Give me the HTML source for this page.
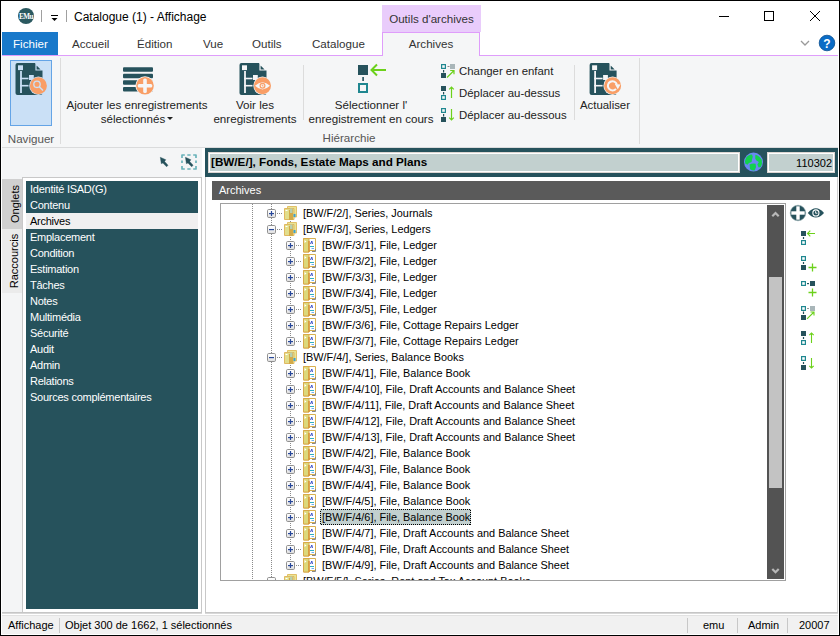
<!DOCTYPE html>
<html><head><meta charset="utf-8">
<style>
*{margin:0;padding:0;box-sizing:border-box}
html,body{width:840px;height:636px;overflow:hidden;background:#fff}
body{position:relative;font-family:"Liberation Sans",sans-serif;color:#000}
.a{position:absolute}
.t{position:absolute;white-space:nowrap;line-height:1}
.win{position:absolute;left:0;top:0;width:840px;height:636px;border:1px solid #000;z-index:50}
</style></head><body>
<div class="win"></div>
<svg class="a" style="left:0;top:0" width="840" height="32">
  <circle cx="26" cy="16" r="8" fill="#2b5960"/>
  <text x="26" y="18.8" font-family="Liberation Serif" font-weight="bold" font-size="7.2" fill="#fff" text-anchor="middle" letter-spacing="-0.6">EMu</text>
  <rect x="41" y="10" width="1" height="12" fill="#a0a0a0"/>
  <rect x="51" y="15" width="7" height="1" fill="#000"/>
  <path d="M51.5 18 L57.5 18 L54.5 21 Z" fill="#000"/>
  <rect x="66" y="10" width="1" height="12" fill="#a0a0a0"/>
  <rect x="719" y="16" width="10" height="1" fill="#000"/>
  <rect x="764.5" y="11.5" width="9" height="9" fill="none" stroke="#000" stroke-width="1"/>
  <path d="M810 11 L820 21 M820 11 L810 21" stroke="#000" stroke-width="1"/>
</svg>
<div class="t" style="left:74px;top:11px;font-size:12px;color:#000">Catalogue (1) - Affichage</div>
<div class="a" style="left:382px;top:5px;width:99px;height:27px;background:#e9ccfb"></div>
<div class="t" style="left:382px;top:13px;width:99px;text-align:center;font-size:11.6px;color:#333">Outils d'archives</div>
<div class="a" style="left:2px;top:32px;width:56px;height:23px;background:#1979ca"></div>
<div class="t" style="left:13px;top:38px;font-size:11.6px;color:#fff">Fichier</div>
<div class="t" style="left:72px;top:38px;font-size:11.6px;color:#333">Accueil</div>
<div class="t" style="left:137px;top:38px;font-size:11.6px;color:#333">Édition</div>
<div class="t" style="left:203px;top:38px;font-size:11.6px;color:#333">Vue</div>
<div class="t" style="left:252px;top:38px;font-size:11.6px;color:#333">Outils</div>
<div class="t" style="left:312px;top:38px;font-size:11.6px;color:#333">Catalogue</div>
<div class="a" style="left:2px;top:55px;width:836px;height:1px;background:#df9dfb"></div>
<div class="a" style="left:382px;top:32px;width:98px;height:24px;background:#f5f6f7;border:1px solid #df9dfb;border-bottom:none"></div>
<div class="t" style="left:382px;top:38px;width:98px;text-align:center;font-size:11.6px;color:#333">Archives</div>
<svg class="a" style="left:795px;top:30px" width="45" height="25">
  <path d="M6 11 L10 15 L14 11" fill="none" stroke="#9a9a9a" stroke-width="1.3"/>
  <circle cx="32" cy="13" r="7.8" fill="#0b6cc6" stroke="#0a4f90" stroke-width="0.8"/>
  <text x="32" y="17.5" font-size="12" font-weight="bold" fill="#fff" text-anchor="middle">?</text>
</svg>
<div class="a" style="left:2px;top:56px;width:836px;height:91px;background:#f5f6f7"></div>
<div class="a" style="left:2px;top:147px;width:836px;height:1px;background:#dadbdc"></div>
<div class="a" style="left:10px;top:60px;width:42px;height:66px;background:#cae0f6;border:1px solid #64a4e6"></div>
<svg class="a" style="left:0;top:56px" width="660" height="92">
  <g transform="translate(15.5,7)">
      <path d="M0 2 Q0 0 2 0 L19.5 0 L27 7.5 L27 30 Q27 32 25 32 L2 32 Q0 32 0 30 Z" fill="#26525c"/>
      <path d="M20.5 1 L20.5 7 L26.5 7 Z" fill="#26525c" stroke="#cae0f6" stroke-width="1.2"/>
      <rect x="2.5" y="2.3" width="5" height="4.8" fill="#cae0f6"/>
      <rect x="4.6" y="8" width="1.8" height="22" fill="#cae0f6"/>
      <rect x="4.6" y="14.7" width="8.4" height="1.6" fill="#cae0f6"/>
      <rect x="4.6" y="21.9" width="8.4" height="1.6" fill="#cae0f6"/>
      <rect x="13.5" y="12" width="4.8" height="5" fill="#cae0f6"/>
    </g>
  <circle cx="38.4" cy="29.8" r="9.2" fill="#cae0f6"/>
  <circle cx="38.4" cy="29.8" r="8.5" fill="#f99e66"/>
  <circle cx="37" cy="28.3" r="3.2" fill="none" stroke="#cae0f6" stroke-width="1.3"/>
  <path d="M39.3 30.8 L43 34.5" stroke="#cae0f6" stroke-width="1.5"/>
  <rect x="60" y="2" width="1" height="86" fill="#dcdcdc"/>
  <rect x="123" y="11.2" width="30" height="4.5" rx="1" fill="#26525c"/>
  <rect x="123" y="17.7" width="30" height="4.5" rx="1" fill="#26525c"/>
  <rect x="123" y="24.3" width="30" height="4.5" rx="1" fill="#26525c"/>
  <rect x="123" y="31" width="30" height="4.5" rx="1" fill="#26525c"/>
  <circle cx="145" cy="29.8" r="9.6" fill="#f5f6f7"/>
  <circle cx="145" cy="29.8" r="8.8" fill="#f99e66"/>
  <rect x="143.2" y="22.5" width="3.6" height="14.6" rx="1.5" fill="#f5f6f7"/>
  <rect x="137.7" y="28" width="14.6" height="3.6" rx="1.5" fill="#f5f6f7"/>
  <g transform="translate(239.5,7)">
      <path d="M0 2 Q0 0 2 0 L19.5 0 L27 7.5 L27 30 Q27 32 25 32 L2 32 Q0 32 0 30 Z" fill="#26525c"/>
      <path d="M20.5 1 L20.5 7 L26.5 7 Z" fill="#26525c" stroke="#f5f6f7" stroke-width="1.2"/>
      <rect x="2.5" y="2.3" width="5" height="4.8" fill="#f5f6f7"/>
      <rect x="4.6" y="8" width="1.8" height="22" fill="#f5f6f7"/>
      <rect x="4.6" y="14.7" width="8.4" height="1.6" fill="#f5f6f7"/>
      <rect x="4.6" y="21.9" width="8.4" height="1.6" fill="#f5f6f7"/>
      <rect x="13.5" y="12" width="4.8" height="5" fill="#f5f6f7"/>
    </g>
  <circle cx="262.5" cy="29.8" r="9.2" fill="#f5f6f7"/>
  <circle cx="262.5" cy="29.8" r="8.5" fill="#f99e66"/>
  <path d="M255 29.8 Q262.5 22.5 270 29.8 Q262.5 37 255 29.8 Z" fill="#f5f6f7"/>
  <circle cx="262.5" cy="29.8" r="3" fill="#f99e66"/>
  <circle cx="262.5" cy="29.8" r="1.8" fill="#f5f6f7"/>
  <path d="M262.3 28.6 V30 H263.6" fill="none" stroke="#f99e66" stroke-width="0.9"/>
  <rect x="303" y="9" width="1" height="55" fill="#dcdcdc"/>
  <rect x="358" y="9" width="10" height="10" fill="#26525c"/>
  <rect x="362.3" y="21" width="1.6" height="4" fill="#26525c"/>
  <rect x="359" y="28" width="8" height="8" fill="none" stroke="#1f8790" stroke-width="2"/>
  <path d="M371 14 L386 14 M377 8.5 L371.5 14 L377 19.5" fill="none" stroke="#6cd11b" stroke-width="2"/>
  <g>
    <rect x="441.6" y="8.6" width="3.8" height="3.8" fill="none" stroke="#1f8790" stroke-width="1.2"/>
    <rect x="447.5" y="10" width="2" height="1" fill="#888"/>
    <rect x="450" y="8" width="5" height="5" fill="#a9b6b9"/>
    <rect x="443" y="14" width="1.2" height="2.5" fill="#26525c"/>
    <rect x="441" y="17" width="5" height="5" fill="#26525c"/>
    <path d="M447 21.5 L454 14.5 M450.2 14.5 L454 14.5 L454 18.3" fill="none" stroke="#6cd11b" stroke-width="1.2"/>
  </g>
  <g>
    <rect x="441" y="30" width="5" height="5" fill="#26525c"/>
    <rect x="443" y="36" width="1.2" height="2.5" fill="#26525c"/>
    <rect x="441.6" y="39.6" width="3.8" height="3.8" fill="none" stroke="#1f8790" stroke-width="1.2"/>
    <path d="M451.5 31 L451.5 42 M449.2 33.3 L451.5 31 L453.8 33.3" fill="none" stroke="#6cd11b" stroke-width="1.2"/>
  </g>
  <g>
    <rect x="441.6" y="52.6" width="3.8" height="3.8" fill="none" stroke="#1f8790" stroke-width="1.2"/>
    <rect x="443" y="58" width="1.2" height="2.5" fill="#26525c"/>
    <rect x="441" y="61" width="5" height="5" fill="#26525c"/>
    <path d="M451.5 53 L451.5 64 M449.2 61.7 L451.5 64 L453.8 61.7" fill="none" stroke="#6cd11b" stroke-width="1.2"/>
  </g>
  <rect x="574" y="9" width="1" height="55" fill="#dcdcdc"/>
  <g transform="translate(589.6,7)">
      <path d="M0 2 Q0 0 2 0 L19.5 0 L27 7.5 L27 30 Q27 32 25 32 L2 32 Q0 32 0 30 Z" fill="#26525c"/>
      <path d="M20.5 1 L20.5 7 L26.5 7 Z" fill="#26525c" stroke="#f5f6f7" stroke-width="1.2"/>
      <rect x="2.5" y="2.3" width="5" height="4.8" fill="#f5f6f7"/>
      <rect x="4.6" y="8" width="1.8" height="22" fill="#f5f6f7"/>
      <rect x="4.6" y="14.7" width="8.4" height="1.6" fill="#f5f6f7"/>
      <rect x="4.6" y="21.9" width="8.4" height="1.6" fill="#f5f6f7"/>
      <rect x="13.5" y="12" width="4.8" height="5" fill="#f5f6f7"/>
    </g>
  <circle cx="612.6" cy="29.7" r="9.2" fill="#f5f6f7"/>
  <circle cx="612.6" cy="29.7" r="8.5" fill="#f99e66"/>
  <path d="M616.9 28.6 A4.6 4.6 0 1 0 616 32.8" fill="none" stroke="#f5f6f7" stroke-width="2"/>
  <path d="M614.8 28 L620.5 28.4 L617.8 33.2 Z" fill="#f5f6f7"/>
  <rect x="639" y="2" width="1" height="86" fill="#dcdcdc"/>
</svg>
<div class="t" style="left:0px;top:132.5px;width:62px;text-align:center;font-size:11.6px;color:#555">Naviguer</div>
<div class="t" style="left:62px;top:98.1px;width:150px;text-align:center;font-size:11.6px;color:#222;line-height:13.4px">Ajouter les enregistrements<br>sélectionnés<span style="display:inline-block;width:0;height:0;border-left:3px solid transparent;border-right:3px solid transparent;border-top:3px solid #222;vertical-align:3px;margin-left:2px"></span></div>
<div class="t" style="left:205px;top:98.1px;width:100px;text-align:center;font-size:11.6px;color:#222;line-height:13.4px">Voir les<br>enregistrements</div>
<div class="t" style="left:300px;top:98.1px;width:142px;text-align:center;font-size:11.6px;color:#222;line-height:13.4px">Sélectionner l'<br>enregistrement en cours</div>
<div class="t" style="left:304px;top:132px;width:90px;text-align:center;font-size:11.6px;color:#555">Hiérarchie</div>
<div class="t" style="left:459px;top:66px;font-size:11.4px;color:#222">Changer en enfant</div>
<div class="t" style="left:459px;top:88px;font-size:11.4px;color:#222">Déplacer au-dessus</div>
<div class="t" style="left:459px;top:110px;font-size:11.4px;color:#222">Déplacer au-dessous</div>
<div class="t" style="left:573px;top:100px;width:64px;text-align:center;font-size:11.4px;color:#222">Actualiser</div>
<div class="a" style="left:2px;top:148px;width:203px;height:465px;background:#f4f5f6"></div>
<div class="a" style="left:202px;top:148px;width:3px;height:465px;background:#fff"></div>
<svg class="a" style="left:150px;top:148px" width="52" height="28">
  <path d="M10.3 9.3 L15.8 11.7 L14.6 13.4 L18 17.2 L16.6 18.8 L12.9 15 L11.3 15.7 Z" fill="#26525c" stroke="#26525c" stroke-width="0.4" stroke-linejoin="round"/>
  <path d="M32 10 V7 H34.8 M43.2 7 H46 V10 M46 18 V21 H43.2 M34.8 21 H32 V18 M37.3 7 H40.6 M37.3 21 H40.6 M32 12.5 V15 M46 12.5 V15" fill="none" stroke="#6ab3ba" stroke-width="1.7" stroke-linejoin="round"/>
  <path d="M35.4 9.3 L40.9 11.7 L39.7 13.4 L43.1 17.2 L41.7 18.8 L38 15 L36.4 15.7 Z" fill="#26525c" stroke="#26525c" stroke-width="0.4" stroke-linejoin="round"/>
</svg>
<div class="a" style="left:2px;top:179px;width:20px;height:50px;background:#d0d0d0"></div>
<div class="a" style="left:2px;top:229px;width:20px;height:64px;background:#ebebeb"></div>
<div class="t" style="left:-9px;top:198px;width:50px;height:12px;text-align:center;font-size:11px;transform:rotate(-90deg)">Onglets</div>
<div class="t" style="left:-17px;top:255px;width:64px;height:12px;text-align:center;font-size:11px;transform:rotate(-90deg)">Raccourcis</div>
<div class="a" style="left:22px;top:177px;width:180px;height:436px;background:#fff;border:1px solid #c8c8c8;border-bottom:none"></div>
<div class="a" style="left:26px;top:181px;width:172px;height:428px;background:#26525c"></div>
<div class="t" style="left:30px;top:184px;font-size:11px;letter-spacing:-0.25px;color:#fff">Identité ISAD(G)</div>
<div class="t" style="left:30px;top:200px;font-size:11px;letter-spacing:-0.25px;color:#fff">Contenu</div>
<div class="a" style="left:26px;top:213px;width:172px;height:16px;background:#f0f0f0"></div>
<div class="t" style="left:30px;top:216px;font-size:11px;letter-spacing:-0.25px;color:#000">Archives</div>
<div class="t" style="left:30px;top:232px;font-size:11px;letter-spacing:-0.25px;color:#fff">Emplacement</div>
<div class="t" style="left:30px;top:248px;font-size:11px;letter-spacing:-0.25px;color:#fff">Condition</div>
<div class="t" style="left:30px;top:264px;font-size:11px;letter-spacing:-0.25px;color:#fff">Estimation</div>
<div class="t" style="left:30px;top:280px;font-size:11px;letter-spacing:-0.25px;color:#fff">Tâches</div>
<div class="t" style="left:30px;top:296px;font-size:11px;letter-spacing:-0.25px;color:#fff">Notes</div>
<div class="t" style="left:30px;top:312px;font-size:11px;letter-spacing:-0.25px;color:#fff">Multimédia</div>
<div class="t" style="left:30px;top:328px;font-size:11px;letter-spacing:-0.25px;color:#fff">Sécurité</div>
<div class="t" style="left:30px;top:344px;font-size:11px;letter-spacing:-0.25px;color:#fff">Audit</div>
<div class="t" style="left:30px;top:360px;font-size:11px;letter-spacing:-0.25px;color:#fff">Admin</div>
<div class="t" style="left:30px;top:376px;font-size:11px;letter-spacing:-0.25px;color:#fff">Relations</div>
<div class="t" style="left:30px;top:392px;font-size:11px;letter-spacing:-0.25px;color:#fff">Sources complémentaires</div>
<div class="a" style="left:205px;top:148px;width:633px;height:29px;background:#26525c"></div>
<div class="a" style="left:208px;top:152px;width:532px;height:21px;background:#c2d0cf;border:1px solid #dcd6d2;box-shadow:inset 0 0 0 1px #fff"></div>
<div class="t" style="left:211px;top:156px;font-size:11.7px;font-weight:bold;color:#000">[BW/E/], Fonds, Estate Maps and Plans</div>
<svg class="a" style="left:743px;top:152px" width="21" height="21">
  <circle cx="10.5" cy="10.1" r="9.5" fill="#6a88f2"/>
  <path d="M3 6 Q5 2.8 9 2.5 L9.8 4.8 L9 7.5 L8.6 10 L6 11 L4.4 12.8 L2.2 11.6 Q1.6 8.5 3 6 Z" fill="#12d14e"/>
  <path d="M12.4 2.8 Q17 4 18.8 8 Q19.6 11.8 17.8 15 L15.6 15.4 L14.4 12.6 L15.8 10 L13.4 8.6 L12.2 6.4 Z" fill="#12d14e"/>
  <path d="M6.6 12.4 Q9.4 10.8 12.6 11.8 L13 15 L11.6 18.6 Q9 18.8 7 17 Z" fill="#12d14e"/>
</svg>
<div class="a" style="left:767px;top:152px;width:68px;height:21px;background:#c2d0cf;border:1px solid #dcd6d2;box-shadow:inset 0 0 0 1px #fff"></div>
<div class="t" style="left:768px;top:157.5px;width:64px;text-align:right;font-size:11px;color:#000">110302</div>
<div class="a" style="left:205px;top:177px;width:633px;height:436px;background:#fff;border-left:1px solid #c8c8c8"></div>
<div class="a" style="left:212px;top:181px;width:618px;height:19px;background:#5a5a5a"></div>
<div class="t" style="left:219px;top:185px;font-size:11px;color:#fff">Archives</div>
<div class="a" style="left:220px;top:203px;width:566px;height:378px;border:1px solid #a0a0a0;overflow:hidden;background:#fff">
<div class="a" style="left:-221px;top:-204px;width:840px;height:636px">
<svg class="a" style="left:0;top:0" width="840" height="636">
  <defs>
    <linearGradient id="eg" x1="0" y1="0" x2="0" y2="1"><stop offset="0" stop-color="#fff"/><stop offset="0.5" stop-color="#f4f4f4"/><stop offset="1" stop-color="#dcdcdc"/></linearGradient>
    <g id="fold">
      <path d="M3.5 0.5 H12.5 V11 H3.5 Z" fill="#e8e496" stroke="#e2c068" stroke-width="1"/>
      <path d="M0.5 2.5 H10 V13.5 H0.5 Z" fill="#e2de8c" stroke="#e0b860" stroke-width="1"/>
      <path d="M5 4 L9 3 L9 14 L5 14 Z" fill="#d2aa48"/>
      <path d="M6 2.5 H8.5 V7 H6 Z" fill="#b8d0b0"/>
      <path d="M9.5 8 H11.5 V11 H9.5 Z" fill="#3aa0d0"/>
      <path d="M1.5 4 H3.5 V5 H1.5 Z" fill="#fff"/>
    </g>
    <g id="file">
      <path d="M0.5 0.5 H12.5 V12.5 H6 V14 H0.5 Z" fill="#fff" stroke="#d8b050" stroke-width="1"/>
      <path d="M0.5 0.5 H6 V14 H0.5 Z" fill="#dcd87a" stroke="#d9a84a" stroke-width="1"/>
      <path d="M1.5 2 L3.5 3.5 L1.5 5 Z" fill="#fff"/>
      <path d="M6 3 V14" stroke="#d89030" stroke-width="1.4"/>
      <path d="M7.5 6 L8.8 3 L9.5 6" fill="none" stroke="#3a50c8" stroke-width="1"/>
      <path d="M7 8.5 H11" stroke="#30b0c0" stroke-width="1"/>
      <path d="M8.5 10.5 H11" stroke="#70b0f0" stroke-width="1"/>
      <path d="M12.5 11 V13.5 H9" fill="none" stroke="#888" stroke-width="1"/>
    </g>
  </defs>
<path d="M252.5 204 V580" stroke="#8a8a8a" stroke-width="1" stroke-dasharray="1 1"/>
<path d="M271.5 204 V581" stroke="#8a8a8a" stroke-width="1" stroke-dasharray="1 1"/>
<path d="M290.5 221 V341" stroke="#8a8a8a" stroke-width="1" stroke-dasharray="1 1"/>
<path d="M290.5 365 V565" stroke="#8a8a8a" stroke-width="1" stroke-dasharray="1 1"/>
<path d="M277 213.5 H283" stroke="#8a8a8a" stroke-width="1" stroke-dasharray="1 1"/>
<rect x="267.5" y="209.5" width="8" height="8" rx="1.2" fill="url(#eg)" stroke="#919191" stroke-width="1"/>
<rect x="269" y="213" width="5" height="1.2" fill="#28489a"/>
<rect x="270.9" y="211" width="1.2" height="5" fill="#28489a"/>
<use href="#fold" x="284" y="206"/>
<path d="M277 229.5 H283" stroke="#8a8a8a" stroke-width="1" stroke-dasharray="1 1"/>
<rect x="267.5" y="225.5" width="8" height="8" rx="1.2" fill="url(#eg)" stroke="#919191" stroke-width="1"/>
<rect x="269" y="229" width="5" height="1.2" fill="#28489a"/>
<use href="#fold" x="284" y="222"/>
<path d="M296 245.5 H302" stroke="#8a8a8a" stroke-width="1" stroke-dasharray="1 1"/>
<rect x="286.5" y="241.5" width="8" height="8" rx="1.2" fill="url(#eg)" stroke="#919191" stroke-width="1"/>
<rect x="288" y="245" width="5" height="1.2" fill="#28489a"/>
<rect x="289.9" y="243" width="1.2" height="5" fill="#28489a"/>
<use href="#file" x="303" y="238"/>
<path d="M296 261.5 H302" stroke="#8a8a8a" stroke-width="1" stroke-dasharray="1 1"/>
<rect x="286.5" y="257.5" width="8" height="8" rx="1.2" fill="url(#eg)" stroke="#919191" stroke-width="1"/>
<rect x="288" y="261" width="5" height="1.2" fill="#28489a"/>
<rect x="289.9" y="259" width="1.2" height="5" fill="#28489a"/>
<use href="#file" x="303" y="254"/>
<path d="M296 277.5 H302" stroke="#8a8a8a" stroke-width="1" stroke-dasharray="1 1"/>
<rect x="286.5" y="273.5" width="8" height="8" rx="1.2" fill="url(#eg)" stroke="#919191" stroke-width="1"/>
<rect x="288" y="277" width="5" height="1.2" fill="#28489a"/>
<rect x="289.9" y="275" width="1.2" height="5" fill="#28489a"/>
<use href="#file" x="303" y="270"/>
<path d="M296 293.5 H302" stroke="#8a8a8a" stroke-width="1" stroke-dasharray="1 1"/>
<rect x="286.5" y="289.5" width="8" height="8" rx="1.2" fill="url(#eg)" stroke="#919191" stroke-width="1"/>
<rect x="288" y="293" width="5" height="1.2" fill="#28489a"/>
<rect x="289.9" y="291" width="1.2" height="5" fill="#28489a"/>
<use href="#file" x="303" y="286"/>
<path d="M296 309.5 H302" stroke="#8a8a8a" stroke-width="1" stroke-dasharray="1 1"/>
<rect x="286.5" y="305.5" width="8" height="8" rx="1.2" fill="url(#eg)" stroke="#919191" stroke-width="1"/>
<rect x="288" y="309" width="5" height="1.2" fill="#28489a"/>
<rect x="289.9" y="307" width="1.2" height="5" fill="#28489a"/>
<use href="#file" x="303" y="302"/>
<path d="M296 325.5 H302" stroke="#8a8a8a" stroke-width="1" stroke-dasharray="1 1"/>
<rect x="286.5" y="321.5" width="8" height="8" rx="1.2" fill="url(#eg)" stroke="#919191" stroke-width="1"/>
<rect x="288" y="325" width="5" height="1.2" fill="#28489a"/>
<rect x="289.9" y="323" width="1.2" height="5" fill="#28489a"/>
<use href="#file" x="303" y="318"/>
<path d="M296 341.5 H302" stroke="#8a8a8a" stroke-width="1" stroke-dasharray="1 1"/>
<rect x="286.5" y="337.5" width="8" height="8" rx="1.2" fill="url(#eg)" stroke="#919191" stroke-width="1"/>
<rect x="288" y="341" width="5" height="1.2" fill="#28489a"/>
<rect x="289.9" y="339" width="1.2" height="5" fill="#28489a"/>
<use href="#file" x="303" y="334"/>
<path d="M277 357.5 H283" stroke="#8a8a8a" stroke-width="1" stroke-dasharray="1 1"/>
<rect x="267.5" y="353.5" width="8" height="8" rx="1.2" fill="url(#eg)" stroke="#919191" stroke-width="1"/>
<rect x="269" y="357" width="5" height="1.2" fill="#28489a"/>
<use href="#fold" x="284" y="350"/>
<path d="M296 373.5 H302" stroke="#8a8a8a" stroke-width="1" stroke-dasharray="1 1"/>
<rect x="286.5" y="369.5" width="8" height="8" rx="1.2" fill="url(#eg)" stroke="#919191" stroke-width="1"/>
<rect x="288" y="373" width="5" height="1.2" fill="#28489a"/>
<rect x="289.9" y="371" width="1.2" height="5" fill="#28489a"/>
<use href="#file" x="303" y="366"/>
<path d="M296 389.5 H302" stroke="#8a8a8a" stroke-width="1" stroke-dasharray="1 1"/>
<rect x="286.5" y="385.5" width="8" height="8" rx="1.2" fill="url(#eg)" stroke="#919191" stroke-width="1"/>
<rect x="288" y="389" width="5" height="1.2" fill="#28489a"/>
<rect x="289.9" y="387" width="1.2" height="5" fill="#28489a"/>
<use href="#file" x="303" y="382"/>
<path d="M296 405.5 H302" stroke="#8a8a8a" stroke-width="1" stroke-dasharray="1 1"/>
<rect x="286.5" y="401.5" width="8" height="8" rx="1.2" fill="url(#eg)" stroke="#919191" stroke-width="1"/>
<rect x="288" y="405" width="5" height="1.2" fill="#28489a"/>
<rect x="289.9" y="403" width="1.2" height="5" fill="#28489a"/>
<use href="#file" x="303" y="398"/>
<path d="M296 421.5 H302" stroke="#8a8a8a" stroke-width="1" stroke-dasharray="1 1"/>
<rect x="286.5" y="417.5" width="8" height="8" rx="1.2" fill="url(#eg)" stroke="#919191" stroke-width="1"/>
<rect x="288" y="421" width="5" height="1.2" fill="#28489a"/>
<rect x="289.9" y="419" width="1.2" height="5" fill="#28489a"/>
<use href="#file" x="303" y="414"/>
<path d="M296 437.5 H302" stroke="#8a8a8a" stroke-width="1" stroke-dasharray="1 1"/>
<rect x="286.5" y="433.5" width="8" height="8" rx="1.2" fill="url(#eg)" stroke="#919191" stroke-width="1"/>
<rect x="288" y="437" width="5" height="1.2" fill="#28489a"/>
<rect x="289.9" y="435" width="1.2" height="5" fill="#28489a"/>
<use href="#file" x="303" y="430"/>
<path d="M296 453.5 H302" stroke="#8a8a8a" stroke-width="1" stroke-dasharray="1 1"/>
<rect x="286.5" y="449.5" width="8" height="8" rx="1.2" fill="url(#eg)" stroke="#919191" stroke-width="1"/>
<rect x="288" y="453" width="5" height="1.2" fill="#28489a"/>
<rect x="289.9" y="451" width="1.2" height="5" fill="#28489a"/>
<use href="#file" x="303" y="446"/>
<path d="M296 469.5 H302" stroke="#8a8a8a" stroke-width="1" stroke-dasharray="1 1"/>
<rect x="286.5" y="465.5" width="8" height="8" rx="1.2" fill="url(#eg)" stroke="#919191" stroke-width="1"/>
<rect x="288" y="469" width="5" height="1.2" fill="#28489a"/>
<rect x="289.9" y="467" width="1.2" height="5" fill="#28489a"/>
<use href="#file" x="303" y="462"/>
<path d="M296 485.5 H302" stroke="#8a8a8a" stroke-width="1" stroke-dasharray="1 1"/>
<rect x="286.5" y="481.5" width="8" height="8" rx="1.2" fill="url(#eg)" stroke="#919191" stroke-width="1"/>
<rect x="288" y="485" width="5" height="1.2" fill="#28489a"/>
<rect x="289.9" y="483" width="1.2" height="5" fill="#28489a"/>
<use href="#file" x="303" y="478"/>
<path d="M296 501.5 H302" stroke="#8a8a8a" stroke-width="1" stroke-dasharray="1 1"/>
<rect x="286.5" y="497.5" width="8" height="8" rx="1.2" fill="url(#eg)" stroke="#919191" stroke-width="1"/>
<rect x="288" y="501" width="5" height="1.2" fill="#28489a"/>
<rect x="289.9" y="499" width="1.2" height="5" fill="#28489a"/>
<use href="#file" x="303" y="494"/>
<path d="M296 517.5 H302" stroke="#8a8a8a" stroke-width="1" stroke-dasharray="1 1"/>
<rect x="286.5" y="513.5" width="8" height="8" rx="1.2" fill="url(#eg)" stroke="#919191" stroke-width="1"/>
<rect x="288" y="517" width="5" height="1.2" fill="#28489a"/>
<rect x="289.9" y="515" width="1.2" height="5" fill="#28489a"/>
<use href="#file" x="303" y="510"/>
<rect x="320" y="509" width="151" height="16" fill="#c2d0cf"/>
<rect x="320.5" y="509.5" width="150" height="15" fill="none" stroke="#000" stroke-width="1" stroke-dasharray="1 1" shape-rendering="crispEdges"/>
<path d="M296 533.5 H302" stroke="#8a8a8a" stroke-width="1" stroke-dasharray="1 1"/>
<rect x="286.5" y="529.5" width="8" height="8" rx="1.2" fill="url(#eg)" stroke="#919191" stroke-width="1"/>
<rect x="288" y="533" width="5" height="1.2" fill="#28489a"/>
<rect x="289.9" y="531" width="1.2" height="5" fill="#28489a"/>
<use href="#file" x="303" y="526"/>
<path d="M296 549.5 H302" stroke="#8a8a8a" stroke-width="1" stroke-dasharray="1 1"/>
<rect x="286.5" y="545.5" width="8" height="8" rx="1.2" fill="url(#eg)" stroke="#919191" stroke-width="1"/>
<rect x="288" y="549" width="5" height="1.2" fill="#28489a"/>
<rect x="289.9" y="547" width="1.2" height="5" fill="#28489a"/>
<use href="#file" x="303" y="542"/>
<path d="M296 565.5 H302" stroke="#8a8a8a" stroke-width="1" stroke-dasharray="1 1"/>
<rect x="286.5" y="561.5" width="8" height="8" rx="1.2" fill="url(#eg)" stroke="#919191" stroke-width="1"/>
<rect x="288" y="565" width="5" height="1.2" fill="#28489a"/>
<rect x="289.9" y="563" width="1.2" height="5" fill="#28489a"/>
<use href="#file" x="303" y="558"/>
<path d="M277 581.5 H283" stroke="#8a8a8a" stroke-width="1" stroke-dasharray="1 1"/>
<rect x="267.5" y="577.5" width="8" height="8" rx="1.2" fill="url(#eg)" stroke="#919191" stroke-width="1"/>
<rect x="269" y="581" width="5" height="1.2" fill="#28489a"/>
<use href="#fold" x="284" y="574"/>
</svg>
<div class="t" style="left:303px;top:208px;font-size:10.9px;color:#000">[BW/F/2/], Series, Journals</div>
<div class="t" style="left:303px;top:224px;font-size:10.9px;color:#000">[BW/F/3/], Series, Ledgers</div>
<div class="t" style="left:322px;top:240px;font-size:10.9px;color:#000">[BW/F/3/1], File, Ledger</div>
<div class="t" style="left:322px;top:256px;font-size:10.9px;color:#000">[BW/F/3/2], File, Ledger</div>
<div class="t" style="left:322px;top:272px;font-size:10.9px;color:#000">[BW/F/3/3], File, Ledger</div>
<div class="t" style="left:322px;top:288px;font-size:10.9px;color:#000">[BW/F/3/4], File, Ledger</div>
<div class="t" style="left:322px;top:304px;font-size:10.9px;color:#000">[BW/F/3/5], File, Ledger</div>
<div class="t" style="left:322px;top:320px;font-size:10.9px;color:#000">[BW/F/3/6], File, Cottage Repairs Ledger</div>
<div class="t" style="left:322px;top:336px;font-size:10.9px;color:#000">[BW/F/3/7], File, Cottage Repairs Ledger</div>
<div class="t" style="left:303px;top:352px;font-size:10.9px;color:#000">[BW/F/4/], Series, Balance Books</div>
<div class="t" style="left:322px;top:368px;font-size:10.9px;color:#000">[BW/F/4/1], File, Balance Book</div>
<div class="t" style="left:322px;top:384px;font-size:10.9px;color:#000">[BW/F/4/10], File, Draft Accounts and Balance Sheet</div>
<div class="t" style="left:322px;top:400px;font-size:10.9px;color:#000">[BW/F/4/11], File, Draft Accounts and Balance Sheet</div>
<div class="t" style="left:322px;top:416px;font-size:10.9px;color:#000">[BW/F/4/12], File, Draft Accounts and Balance Sheet</div>
<div class="t" style="left:322px;top:432px;font-size:10.9px;color:#000">[BW/F/4/13], File, Draft Accounts and Balance Sheet</div>
<div class="t" style="left:322px;top:448px;font-size:10.9px;color:#000">[BW/F/4/2], File, Balance Book</div>
<div class="t" style="left:322px;top:464px;font-size:10.9px;color:#000">[BW/F/4/3], File, Balance Book</div>
<div class="t" style="left:322px;top:480px;font-size:10.9px;color:#000">[BW/F/4/4], File, Balance Book</div>
<div class="t" style="left:322px;top:496px;font-size:10.9px;color:#000">[BW/F/4/5], File, Balance Book</div>
<div class="t" style="left:322px;top:512px;font-size:10.9px;color:#000">[BW/F/4/6], File, Balance Book</div>
<div class="t" style="left:322px;top:528px;font-size:10.9px;color:#000">[BW/F/4/7], File, Draft Accounts and Balance Sheet</div>
<div class="t" style="left:322px;top:544px;font-size:10.9px;color:#000">[BW/F/4/8], File, Draft Accounts and Balance Sheet</div>
<div class="t" style="left:322px;top:560px;font-size:10.9px;color:#000">[BW/F/4/9], File, Draft Accounts and Balance Sheet</div>
<div class="t" style="left:303px;top:576px;font-size:10.9px;color:#000">[BW/F/5/], Series, Rent and Tax Account Books</div>
</div>
</div>
<div class="a" style="left:767px;top:205px;width:17px;height:374px;background:#535353"></div>
<div class="a" style="left:769px;top:277px;width:13px;height:211px;background:#c3c3c3"></div>
<svg class="a" style="left:767px;top:205px" width="17" height="374">
  <path d="M5.3 11.2 L8.5 8 L11.7 11.2" fill="none" stroke="#b8b8b8" stroke-width="2.2"/>
  <path d="M5.3 364 L8.5 367.2 L11.7 364" fill="none" stroke="#b8b8b8" stroke-width="2.2"/>
</svg>
<svg class="a" style="left:786px;top:200px" width="52" height="180">
  <circle cx="12" cy="13" r="7.8" fill="#26525c" stroke="#9fb3b7" stroke-width="0.6"/>
  <rect x="10.3" y="6.3" width="3.4" height="13.4" fill="#fff"/>
  <rect x="5.3" y="11.3" width="13.4" height="3.4" fill="#fff"/>
  <path d="M21.8 12.9 Q29.9 3.6 38 12.9 Q29.9 22.2 21.8 12.9 Z" fill="#26525c"/>
  <circle cx="29.9" cy="12.9" r="3.6" fill="#fff"/>
  <circle cx="29.9" cy="12.9" r="2.5" fill="#26525c"/>
  <path d="M29.6 11.2 V13.2 H31.4" fill="none" stroke="#fff" stroke-width="0.9"/>
  <rect x="15" y="31" width="5" height="5" fill="#26525c"/>
  <rect x="16.9" y="37" width="1.2" height="2" fill="#26525c"/>
  <rect x="15.6" y="40.6" width="3.8" height="3.8" fill="none" stroke="#1f8790" stroke-width="1.2"/>
  <path d="M21.5 33.5 H29 M24.3 30.7 L21.5 33.5 L24.3 36.3" fill="none" stroke="#6cd11b" stroke-width="1.1"/>
  <rect x="15.6" y="56.6" width="3.8" height="3.8" fill="none" stroke="#1f8790" stroke-width="1.2"/>
  <rect x="16.9" y="62" width="1.2" height="2" fill="#26525c"/>
  <rect x="15" y="65" width="5" height="5" fill="#26525c"/>
  <path d="M22.5 67.5 H30.5 M26.5 63.5 V71.5" fill="none" stroke="#6cd11b" stroke-width="1.3"/>
  <rect x="15.6" y="81.6" width="3.8" height="3.8" fill="none" stroke="#1f8790" stroke-width="1.2"/>
  <rect x="21" y="83" width="2" height="1.2" fill="#26525c"/>
  <rect x="24" y="81" width="5" height="5" fill="#26525c"/>
  <path d="M22.5 92.5 H30.5 M26.5 88.5 V96.5" fill="none" stroke="#6cd11b" stroke-width="1.3"/>
  <rect x="15.6" y="106.6" width="3.8" height="3.8" fill="none" stroke="#1f8790" stroke-width="1.2"/>
  <rect x="21" y="108" width="2" height="1" fill="#999"/>
  <rect x="24" y="106" width="5" height="5" fill="#a9b6b9"/>
  <rect x="16.9" y="111.5" width="1.2" height="2.5" fill="#26525c"/>
  <rect x="15" y="115" width="5" height="5" fill="#26525c"/>
  <path d="M21 118.8 L28 112 M24.5 112 L28 112 L28 115.5" fill="none" stroke="#6cd11b" stroke-width="1.1"/>
  <rect x="15" y="131" width="5" height="5" fill="#26525c"/>
  <rect x="16.9" y="137" width="1.2" height="2" fill="#26525c"/>
  <rect x="15.6" y="140.6" width="3.8" height="3.8" fill="none" stroke="#1f8790" stroke-width="1.2"/>
  <path d="M25.5 133 V143 M23.3 135.2 L25.5 133 L27.7 135.2" fill="none" stroke="#6cd11b" stroke-width="1.1"/>
  <rect x="15.6" y="156.6" width="3.8" height="3.8" fill="none" stroke="#1f8790" stroke-width="1.2"/>
  <rect x="16.9" y="162" width="1.2" height="2" fill="#26525c"/>
  <rect x="15" y="165" width="5" height="5" fill="#26525c"/>
  <path d="M25.5 158 V168 M23.3 165.8 L25.5 168 L27.7 165.8" fill="none" stroke="#6cd11b" stroke-width="1.1"/>
</svg>
<div class="a" style="left:205px;top:177px;width:633px;height:436px;border-right:1px solid #d0d0d0"></div>
<div class="a" style="left:2px;top:612px;width:836px;height:1px;background:#c6c6c6"></div>
<div class="a" style="left:2px;top:613px;width:836px;height:1px;background:#d8d8d8"></div>
<div class="a" style="left:202px;top:612px;width:3px;height:2px;background:#fff"></div>
<div class="a" style="left:1px;top:614px;width:837px;height:1px;background:#fff"></div>
<div class="a" style="left:2px;top:615px;width:836px;height:1px;background:#e2e2e2"></div>
<div class="a" style="left:2px;top:616px;width:836px;height:18px;background:#f1f1f1"></div>
<div class="t" style="left:8px;top:620px;font-size:11px">Affichage</div>
<div class="a" style="left:59px;top:618px;width:1px;height:15px;background:#c8c8c8"></div>
<div class="t" style="left:65px;top:620px;font-size:11px">Objet 300 de 1662, 1 sélectionnés</div>
<div class="a" style="left:687px;top:618px;width:1px;height:15px;background:#c8c8c8"></div>
<div class="t" style="left:703px;top:620px;font-size:11px">emu</div>
<div class="a" style="left:737px;top:618px;width:1px;height:15px;background:#c8c8c8"></div>
<div class="t" style="left:748px;top:620px;font-size:11px">Admin</div>
<div class="a" style="left:787px;top:618px;width:1px;height:15px;background:#c8c8c8"></div>
<div class="t" style="left:799px;top:620px;font-size:11px">20007</div>
</body></html>
